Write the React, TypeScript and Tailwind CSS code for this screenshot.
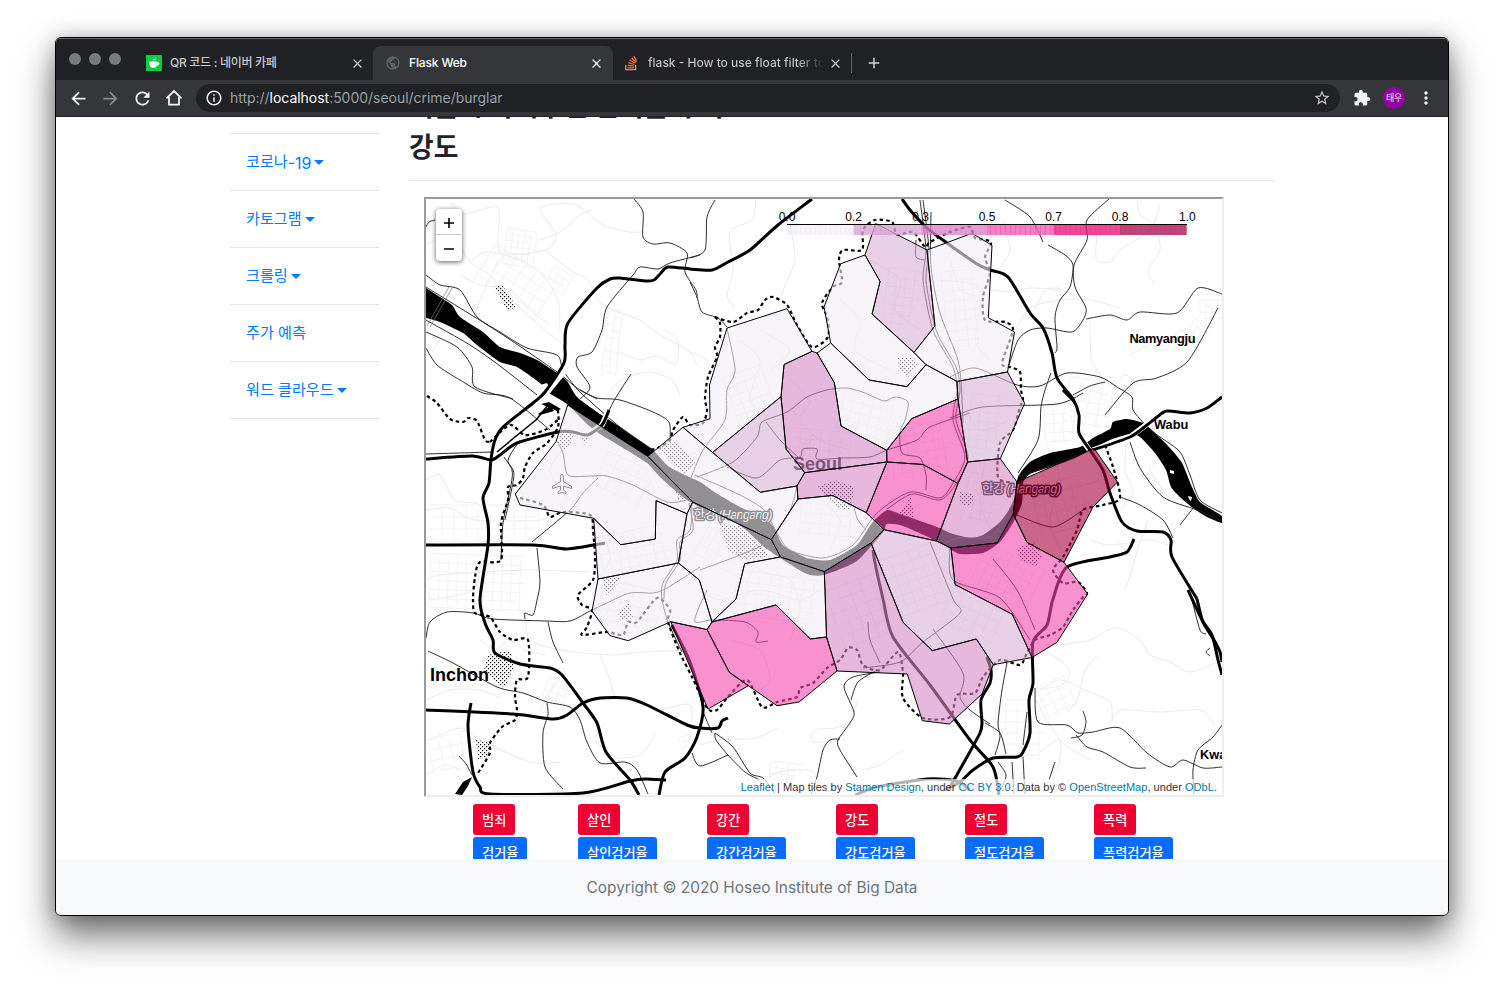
import React from "react";
import {
  MdAdd,
  MdArrowBack,
  MdArrowForward,
  MdClose,
  MdExtension,
  MdMoreVert,
  MdOutlineInfo,
  MdPublic,
  MdRefresh,
  MdStarBorder,
} from "react-icons/md";

type Pt = [number, number];

const parse = (s: string): Pt[] =>
  s.trim().split(/\s+/).map((p) => p.split(",").map(Number) as Pt);

/** Turns a list of points into a gently rounded path. */
function smooth(s: string, t = 0.13): string {
  const p = parse(s);
  let d = `M${p[0][0]} ${p[0][1]}`;
  for (let i = 0; i < p.length - 1; i++) {
    const a = p[Math.max(0, i - 1)];
    const b = p[i];
    const c = p[i + 1];
    const e = p[Math.min(p.length - 1, i + 2)];
    d += `C${(b[0] + (c[0] - a[0]) * t).toFixed(1)} ${(b[1] + (c[1] - a[1]) * t).toFixed(1)} ${(c[0] - (e[0] - b[0]) * t).toFixed(1)} ${(c[1] - (e[1] - b[1]) * t).toFixed(1)} ${c[0]} ${c[1]}`;
  }
  return d;
}

const PALE = "#f1eef6";
const LIGHT = "#d9b2d7";
const PINK = "#d489c5";
const HOT = "#f347ab";
const DARK = "#a5003c";

const districts: [string, string][] = [
  [LIGHT, "875.7,223.5 927,250 935,326 914,352.5 872,314 880,281.5 865,255"],
  [PALE, "865,255 840.7,263.7 824,307 830.7,343 869,380 907,386.7 926,364.7 914,352.5 872,314 880,281.5"],
  [PALE, "927,250 972,233.3 992,245.3 988.3,317.7 1014.5,332 1007.5,372 957,381.5 926,364.7 914,352.5 935,326"],
  [PALE, "817,353 830.7,343 869,380 907,386.7 926,364.7 957,381.5 958,399 911.7,418.7 886.7,450.3 841,426 834.3,382.7"],
  [PINK, "812,351.3 784,364.5 781,396.7 786,449 804.7,472.7 887,462 886.7,450.3 841,426 834.3,382.7 817,353"],
  [PALE, "727,328 787,308.7 812,351.3 784,364.5 781,396.7 712.5,452.5 683,427.3 710,418.7 709.5,385"],
  [LIGHT, "781,396.7 786,449 804.7,472.7 797,486 760.3,492.3 712.5,452.5"],
  [PALE, "683,427.3 712.5,452.5 760.3,492.3 797,486 798,499 771.3,539.7 692.7,502 647.7,456.3"],
  [PINK, "804.7,472.7 887,462 866.3,512.7 832.5,495.5 798,499 797,486"],
  [PALE, "798,499 832.5,495.5 866.3,512.7 884,529.7 871,543 824.3,571.7 780.5,557 771.3,539.7"],
  [HOT, "886.7,450.3 911.7,418.7 958,399 967.7,462 958,483.5 923,464.5 887,462"],
  [HOT, "887,462 923,464.5 958,483.5 936.5,541 884,529.7 866.3,512.7"],
  [LIGHT, "957,381.5 1007.5,372 1024.7,403.3 1000.3,458.7 967.7,462 958,399"],
  [PINK, "967.7,462 1000.3,458.7 1017,482 1013.3,514.3 997.3,543 951,548 936.5,541 958,483.5"],
  [DARK, "1017,482 1094,448.3 1117.5,482 1093,507 1064,562.3 1027,542.5 1013.3,514.3"],
  [HOT, "951,548 997.3,543 1013.3,514.3 1027,542.5 1064,562.3 1087.7,594 1057,642.3 1032,657.5 1012.3,614.3 955,584.5"],
  [LIGHT, "871,543 884,529.7 936.5,541 951,548 955,584.5 1012.3,614.3 1032,657.5 993.3,664.7 976.3,639 932.3,650.7 903,622.3"],
  [PINK, "824.3,571.7 871,543 903,622.3 932.3,650.7 976.3,639 993.3,664.7 982,694 949.3,724 922.3,720.7 907.3,674 837,671 826.5,637"],
  [PALE, "692.7,502 771.3,539.7 780.5,557 744.7,563.7 736,599 712,622 699.3,580 678.3,563 687,513.7"],
  [PALE, "744.7,563.7 780.5,557 824.3,571.7 826.5,637 810.3,639 776,605 712,622 736,599"],
  [HOT, "712,622 776,605 810.3,639 826.5,637 837,671 799,702 777,705.7 729.3,672.3 707,629.5"],
  [HOT, "670.7,621.7 707,629.5 729.3,672.3 748.3,685.7 708,709"],
  [PALE, "598,579 678.3,563 699.3,580 712,622 707,629.5 670.7,621.7 628.3,640.7 610,635.7 592,611"],
  [PALE, "593.7,518.3 620.7,544.7 655.3,539 656,500.5 687,513.7 678.3,563 598,579"],
  [PALE, "567.7,405 647.7,456.3 692.7,502 687,513.7 656,500.5 655.3,539 620.7,544.7 593.7,518.3 520,505 515.3,494 556,441.7"],
];

const river =
  "426,288 440,297 452,305 460,317 483,332 500,347 520,353 537,360 557,373 567,381 577,397 597,412 620,427 637,439 653,450 668,466 687,476 700,482 716,493 740,507 764,518 774,527 783,545 807,558 830,560 857,545 872,523 887,510 903,515 937,527 950,533 970,538 983,535 1000,522 1013,503 1018,477 1030,462 1050,453 1080,447 1093,438 1110,429 1113,422 1127,419 1143,423 1153,431 1170,448 1182,463 1192,487 1200,502 1222,516 1222,523 1207,517 1193,508 1181,498 1171,487 1166,470 1155,453 1140,437 1130,434 1110,440 1093,449 1073,459 1050,467 1030,474 1023,483 1022,503 1013,523 1000,542 983,553 960,554 950,549 937,541 903,526 887,524 883,532 857,561 824,575 807,574 780,558 763,546 745,529 725,517 708,511 690,502 678,493 660,477 647,463 620,446 600,434 587,424 567,404 547,392 540,383 517,367 500,362 477,345 463,333 440,322 426,318";

const heavy: string[] = [
  "812,199 778,225 750,250 728,262 712,270 690,269 668,267 660,274 654,280 645,281 620,278 610,279 597,288 568,323 565,345 564,363 545,392 533,403 503,427 495,440 491,459 489,483 483,498 488,523 488,545 480,599 485,623 493,640 495,653 520,664 550,668 562,675 583,703 597,723 606,752 630,780 639,795",
  "426,459 472,456 491,460 500,455 517,443 558,432 573,432 587,435 602,425 609,410",
  "426,545 533,545 567,549 605,543",
  "426,710 513,714 553,719 567,715 583,703 600,698 627,698 647,705 687,725 700,728 718,728 722,721 728,718",
  "471,703 468,727 473,772 480,787 490,794 583,793 630,781 645,779 666,780",
  "659,795 665,772 685,758 697,737 703,707 690,662 672,625",
  "902,199 910,210 927,228 947,243 977,264 990,270 1008,277 1030,313 1043,328 1052,353 1057,378 1073,399 1079,415 1079,433 1090,450 1103,470 1110,493 1122,522 1137,531 1163,532 1171,540 1172,557 1197,599",
  "1188,590 1202,620 1212,635 1218,660 1222,675",
  "1197,599 1203,622 1214,640 1220,652 1222,662",
  "1222,397 1207,408 1190,413 1167,411 1157,417 1147,425 1130,437 1093,450",
  "1134,539 1127,552 1110,557 1067,567 1053,599 1047,625 1033,642 1033,683 1029,700 1030,733 1023,752 1017,757 993,758 973,770 960,782 945,790",
  "873,550 875,563 883,599 893,637 930,685 970,740 993,767 999,795",
  "987,657 991,670 990,683 981,700 982,723 980,733 967,757 950,787",
  "855,795 877,787 927,779 957,781 970,790",
  "1063,390 1071,398 1075,403",
];

const thin: string[] = [
  "634,199 643,212 643,237 653,244 670,243 687,253 685,272 696,290 697,298",
  "690,282 697,297 702,312 718,318 727,327",
  "700,255 670,263 658,269 640,267 633,275 607,307 602,330 592,352 578,357 577,367 590,387 580,399",
  "715,200 707,217 705,250 690,258",
  "435,220 429,222 426,227",
  "426,275 440,285 460,290 477,317 500,332 527,348 557,355 563,370 578,390 600,410 620,427 653,450",
  "426,287 500,333 557,372 577,388 597,399",
  "426,332 457,347 472,367 475,387 513,399",
  "426,320 470,345 500,366 537,395",
  "426,348 437,365 460,380 483,393 510,398 550,430",
  "631,374 615,399 602,425",
  "580,390 597,398 620,400 653,412 669,422 670,440",
  "426,454 492,452",
  "504,457 512,470 511,485 503,523 501,560",
  "520,440 508,460 514,475 505,520",
  "556,440 563,453 568,475 590,476 607,476 633,485 667,502 687,500",
  "598,478 583,493 570,510 532,542",
  "537,548 540,582 537,600 533,615 525,613 525,619",
  "426,638 430,622 447,612 473,613 493,619 547,621 570,621 592,610 607,603 630,593 653,593 667,588 700,567",
  "548,622 553,642 563,663",
  "428,651 453,663 497,687 523,693 547,702 570,707 580,720 587,742 600,763 625,762 637,770 648,794",
  "547,703 548,715 543,733 545,767 563,789",
  "715,733 733,747 750,773 763,778 775,794",
  "715,733 716,740 728,755 745,772 760,780",
  "728,755 700,766 692,753",
  "880,672 853,677 844,687 854,712 850,723 838,740 840,750 857,777",
  "877,670 858,682 851,700",
  "840,739 830,740 823,750 817,777 811,794",
  "1005,200 1030,217 1043,242",
  "1048,245 1065,255 1073,265 1070,287 1060,300 1055,317 1057,347 1055,353",
  "1109,199 1087,220 1087,240 1074,265 1075,287 1086,308 1083,320 1072,332 1047,328 1030,330 1018,340 1009,365",
  "1086,319 1110,315 1127,320 1140,312 1177,313 1198,288 1222,294",
  "1218,308 1188,361 1157,378 1133,383 1105,415",
  "950,377 975,368 1017,385 1040,386 1067,373 1100,377 1117,387 1132,397 1133,410 1147,427",
  "1073,395 1090,386 1105,382",
  "1051,373 1045,390 1041,407 1038,440 1018,473",
  "950,418 983,407 1057,404 1083,393",
  "1130,442 1140,468 1163,497 1197,510 1222,521",
  "1198,503 1190,512 1180,525",
  "1143,425 1160,437 1180,452 1190,475 1200,500 1222,513",
  "1120,497 1140,505 1163,520 1173,538",
  "1017,515 1053,527 1083,510",
  "1018,477 1050,466 1093,449",
  "1035,688 1038,722 1067,725 1078,733 1093,732 1120,728 1147,753 1170,767 1183,760 1203,768 1222,767",
  "1083,711 1086,722 1082,735 1071,738",
  "1076,735 1087,747 1103,752 1130,767 1146,768",
  "1222,725 1213,737 1198,750 1193,770 1194,794",
  "1007,663 1002,690 998,723 1000,737 995,755",
  "985,723 1000,733 1006,754",
  "1027,712 1023,745",
  "1023,757 1025,794",
  "998,762 1006,775 1001,790",
  "1012,762 1014,794",
  "1055,762 1049,780",
  "727,328 735,370 727,390 725,420 703,450 690,480",
  "697,477 733,462 757,437 762,422 787,412 807,397 827,390 847,388 865,393 884,401 895,397 908,402 905,420 900,432 902,453 920,458 926,475 926,490",
  "727,467 757,478 780,460 800,457 803,449 817,449 817,459 843,458 870,457 887,450 917,440 930,427 970,413",
  "766,422 780,440 798,457",
  "797,487 790,510 770,540 740,555 700,570",
  "695,475 740,495 764,510 777,533 790,550 823,558 853,545 877,513 910,492 940,498 953,483 965,457 953,420 957,390 953,367 933,330 923,280 926,250 920,200",
  "887,509 912,494 940,500 956,484 968,457 956,420 960,390 956,367 936,330 926,280 929,250 923,200",
  "931,212 931,267 940,313 957,357 961,380 963,423",
  "916,240 916,257 925,260",
  "930,542 953,599 960,613 923,642 900,662 863,668",
  "950,549 953,580 1000,598 1030,640",
  "868,622 870,640 880,663",
  "933,629 963,673 960,697 970,710 990,724",
  "993,559 1017,590 1035,630",
  "692,503 690,530 677,540 677,560 663,583 662,599 668,622 682,652",
  "689,503 693,530 680,542 680,560 666,583 664,599",
  "707,590 700,605 695,622 712,620 745,622 758,632 756,642 768,641",
  "854,508 858,520 866,530",
  "703,712 712,733",
  "942,545 958,538 990,537 1004,520 1014,500",
  "1192,600 1200,630 1206,634",
  "1210,648 1206,652 1210,656",
  "459,756 466,764 472,775",
];

const dashed: string[] = [
  "427,396 437,403 450,419 463,422 468,418 477,421 485,440 490,442",
  "715,317 733,322 747,313 758,310 765,300 773,297 787,305 797,325 812,347 828,337 827,317 822,303 833,287 842,282 839,260 843,250 862,250 863,230 875,220 892,222 897,235 913,232 925,247 930,242 950,232 970,227 975,238 991,242 985,257 990,273 983,297 985,320 1005,322 1013,330 1002,363 1010,367 1020,372 1021,390 1023,400 1020,407 1013,430 1000,443 998,477 1013,483",
  "715,317 720,323 720,337 715,347 717,357 708,377 705,399 707,410 703,423 690,425 683,417 673,430 670,440 658,448 650,450",
  "558,410 558,427 547,443 533,453 525,467 523,478 517,485 508,487 508,500 501,523 501,560 480,562 475,577 473,599 475,613 490,617 500,632 513,640 528,640 528,677 517,680 515,697 517,710 515,720 502,727 490,743 490,753 478,773",
  "520,498 543,505 550,517 563,512 590,515 593,530 595,557 593,580 578,595 582,605 592,610 587,627 582,635 607,632 623,635 628,622 637,622 657,598 670,610 668,622 680,653 692,677 707,708 717,710 727,698 747,680 762,707 777,702 797,697 800,688 813,683 827,668 840,660 848,648 857,650 863,665 880,670 898,652 903,673 903,698 923,718 950,717 957,695 975,693 983,677 1000,660 1020,665 1027,653 1035,640 1050,635 1063,627 1073,610 1083,597 1087,593 1078,582 1063,583 1053,570 1063,557 1077,530 1083,510 1103,505 1120,498 1113,467 1105,445",
  "490,442 510,425 525,435 545,430 560,418",
];

const faint: string[] = [
  "450,202 465,214 498,208 500,252 545,250 556,235 540,208 573,204 590,215 605,226 628,232 641,232",
  "540,240 560,232 580,215 592,210",
  "545,250 570,270 588,280 598,300 613,310 640,320 660,335 690,352 697,366",
  "426,245 452,235 470,262 490,275 500,290 520,308 545,330 563,345",
  "470,262 485,252 512,257 540,272 558,300 560,330",
  "432,352 445,332 470,322 480,300 498,260",
  "460,275 480,285 510,290 530,310 550,325",
  "593,352 600,342 608,308",
  "610,390 625,378 650,372 672,380 680,396",
  "620,352 640,360 656,356 676,364 678,342 665,330",
  "756,200 752,220 730,232 733,270 727,296 735,308",
  "800,200 792,230 795,260 785,285 782,296",
  "690,352 704,358 715,370",
  "990,290 1010,292 1030,288 1060,290 1070,292",
  "1003,220 1010,250 1002,265",
  "1099,215 1096,258 1110,262 1120,250 1150,230 1160,205",
  "1137,200 1140,215 1155,225 1160,250 1148,270 1155,285",
  "1014,332 1030,308 1060,300 1090,300 1120,308",
  "1090,320 1092,360 1110,385 1125,375 1140,386",
  "1190,340 1180,330 1165,350 1150,345 1130,355",
  "1035,310 1045,290 1060,288",
  "1127,440 1125,470 1133,492 1120,510",
  "1148,520 1138,548 1132,570 1125,590",
  "1090,540 1110,545 1150,540 1168,545",
  "1040,648 1060,660 1070,672 1062,685 1036,690",
  "1060,645 1090,640 1108,630 1120,628 1140,640 1150,655 1170,662 1190,672 1222,660",
  "1040,690 1060,680 1085,690 1110,702 1112,722",
  "1097,656 1085,670 1078,698 1068,712",
  "1112,722 1120,710 1160,712 1200,710 1215,725",
  "1040,752 1060,740 1058,770",
  "1030,690 1060,740 1090,760",
  "426,480 440,475 455,500 480,505 490,530",
  "426,510 450,508 475,520 540,520 560,510",
  "426,580 440,575 482,572 530,570 590,572",
  "430,600 470,592 480,575",
  "526,620 530,640 560,650 610,655 640,652 690,650",
  "560,680 550,690 540,712",
  "600,655 610,680 614,698",
  "600,720 596,740 615,757 640,755 655,735",
  "426,700 450,690 480,690 500,698",
  "430,740 460,728 480,740 530,762 560,762",
  "426,775 445,765 460,770",
  "655,712 690,705 690,740",
  "700,745 720,740 755,738 778,728",
  "765,780 780,772 810,770 816,778",
  "858,700 850,720 835,728 815,730 813,742 840,740",
  "862,770 880,765 895,755 903,750",
  "480,640 495,650 510,640 525,650 545,655",
  "1170,500 1150,470 1160,460",
  "590,590 610,560 600,530 570,500 550,470 570,440",
  "700,590 720,600 760,590 800,600 820,590",
  "730,540 760,570 790,580 800,610 790,640",
  "730,640 760,650 770,680 760,690",
  "640,500 660,470 690,455 720,440",
  "740,340 760,360 750,400 770,420",
  "760,330 790,350 770,370",
  "790,380 810,400 800,420 820,440 850,450",
  "840,300 860,320 855,350 890,370",
  "870,260 900,280 895,310 920,330",
  "950,260 960,290 980,300 975,340 990,360",
  "940,280 975,285 985,305",
  "960,400 980,430 1010,420",
  "820,500 840,520 830,550",
  "985,460 980,500 990,530",
  "1040,470 1060,490 1100,480",
  "1050,450 1060,480 1050,520 1060,550",
];

interface Grid { x: number; y: number; w: number; h: number; a: number; s: number }
const grids: Grid[] = [
  { x: 505, y: 230, w: 30, h: 36, a: 8, s: 6 },
  { x: 478, y: 262, w: 80, h: 45, a: 32, s: 12 },
  { x: 605, y: 310, w: 14, h: 66, a: 6, s: 7 },
  { x: 548, y: 270, w: 24, h: 22, a: 30, s: 7 },
  { x: 430, y: 505, w: 110, h: 36, a: 0, s: 12 },
  { x: 430, y: 555, w: 95, h: 54, a: 2, s: 9 },
  { x: 600, y: 530, w: 70, h: 40, a: -12, s: 9 },
  { x: 600, y: 585, w: 60, h: 40, a: 14, s: 10 },
  { x: 700, y: 530, w: 60, h: 40, a: 30, s: 10 },
  { x: 735, y: 575, w: 80, h: 45, a: 8, s: 11 },
  { x: 835, y: 580, w: 55, h: 70, a: -20, s: 12 },
  { x: 888, y: 550, w: 55, h: 60, a: -20, s: 10 },
  { x: 945, y: 590, w: 60, h: 50, a: 24, s: 11 },
  { x: 975, y: 555, w: 65, h: 45, a: 25, s: 9 },
  { x: 1035, y: 480, w: 55, h: 50, a: -14, s: 10 },
  { x: 965, y: 475, w: 35, h: 50, a: 12, s: 9 },
  { x: 800, y: 505, w: 60, h: 35, a: 5, s: 10 },
  { x: 890, y: 425, w: 60, h: 50, a: -10, s: 9 },
  { x: 970, y: 395, w: 35, h: 55, a: 5, s: 9 },
  { x: 840, y: 395, w: 50, h: 40, a: 15, s: 10 },
  { x: 730, y: 370, w: 40, h: 50, a: -20, s: 10 },
  { x: 790, y: 430, w: 60, h: 30, a: 5, s: 10 },
  { x: 885, y: 270, w: 35, h: 60, a: 8, s: 9 },
  { x: 945, y: 270, w: 35, h: 80, a: -6, s: 10 },
  { x: 770, y: 763, w: 35, h: 16, a: 6, s: 6 },
  { x: 995, y: 700, w: 50, h: 60, a: 0, s: 11 },
  { x: 1042, y: 680, w: 32, h: 36, a: -24, s: 10 },
  { x: 1200, y: 300, w: 24, h: 18, a: 0, s: 6 },
  { x: 1188, y: 322, w: 18, h: 22, a: 30, s: 6 },
  { x: 430, y: 735, w: 40, h: 34, a: -12, s: 11 },
  { x: 545, y: 680, w: 26, h: 22, a: 20, s: 7 },
  { x: 680, y: 735, w: 18, h: 14, a: -20, s: 5 },
  { x: 1065, y: 380, w: 45, h: 60, a: 10, s: 11 },
  { x: 1045, y: 405, w: 28, h: 40, a: -4, s: 9 },
  { x: 598, y: 460, w: 50, h: 40, a: 24, s: 12 },
];

function gridPath({ x, y, w, h, s }: Grid): string {
  let d = "";
  for (let i = 0, k = 0; i <= w; i += s, k++) d += `M${x + i} ${y + (k % 3) * 3}V${y + h - (k % 2) * 4}`;
  for (let j = 0, k = 0; j <= h; j += s, k++) d += `M${x + (k % 2) * 4} ${y + j}H${x + w - (k % 3) * 4}`;
  return d;
}

const parks = [
  "495,287 502,285 516,306 508,312",
  "898,358 914,357 917,366 908,377 899,368",
  "560,434 574,434 570,445 564,452 558,444",
  "580,437 590,437 585,445",
  "658,446 676,440 696,464 686,474 668,460",
  "719,524 742,526 770,556 745,560 728,550",
  "675,490 690,492 688,502 678,500",
  "817,487 835,480 855,487 850,510 838,508",
  "905,505 911,497 914,518 898,514",
  "959,492 974,494 972,506 960,504",
  "1017,548 1034,542 1042,556 1036,566 1020,560",
  "602,577 622,577 612,590 606,595",
  "618,612 629,601 633,618 620,620",
  "488,655 510,650 514,666 505,688 496,682 484,668",
  "476,740 490,742 488,756 478,760",
];

const legend: [number, string, string][] = [
  [787, "0.0", "#f3eff8"],
  [853.5, "0.2", "#d9a3d5"],
  [920.5, "0.3", "#dc82c8"],
  [987, "0.5", "#f957b5"],
  [1053.5, "0.7", "#fb0d7b"],
  [1120, "0.8", "#b01150"],
];

const SeoulMap = () => (
  <svg viewBox="426 199 796 596" className="block h-full w-full font-['Liberation_Sans',sans-serif]">
    <defs>
      <pattern id="stipple" width="4" height="4" patternUnits="userSpaceOnUse">
        <rect width="1.200" height="1.200" fill="#000" />
        <rect x="2" y="2" width="1.200" height="1.200" fill="#000" />
      </pattern>
      <pattern id="ticks" width="5" height="10" patternUnits="userSpaceOnUse">
        <rect width="1" height="10" fill="#555" opacity="0.22" />
      </pattern>
    </defs>
    <rect x="426" y="199" width="796" height="596" fill="#fff" />
    <g fill="none" stroke="#e4e4e4" strokeWidth="0.8">
      {faint.map((p) => <path key={p} d={smooth(p)} />)}
      {grids.map((g) => (
        <path key={`${g.x}-${g.y}`} d={gridPath(g)} stroke="#f0f0f0" transform={`rotate(${g.a} ${g.x + g.w / 2} ${g.y + g.h / 2})`} />
      ))}
    </g>
    {parks.map((p) => <polygon key={p} points={p} fill="url(#stipple)" />)}
    <path d={smooth(river, 0.1) + "Z"} fill="#000" />
    <path d="M541 404l8-2 12 7-4 2zM538 414l12-8 4 5-14 4zM455 794l8-12 9-5-4 9-6 9z" fill="#000" />
    <g fill="#fff">
      <path d="M1170 470l4 1 0 3-4-1zM1188 496l4 1-1 4-2-2zM540 385l7-2 3 6-5 1z" />
    </g>
    <g fill="none" stroke="#222" strokeWidth="0.95">
      {thin.map((p) => <path key={p} d={smooth(p)} />)}
    </g>
    <path d="M452 288L430 327M449 287L427 326" stroke="#777" strokeWidth="0.7" />
    <g fill="none" stroke="#fff" strokeWidth="5.500">
      <path d="M566 369L541 400M577 432L587 435L602 425L609 410M1083 441L1095 458M1150 422L1130 437L1093 450" />
    </g>
    <g fill="none" stroke="#000" strokeWidth="2.200" strokeDasharray="3.5 3">
      {dashed.map((p) => <path key={p} d={smooth(p)} />)}
    </g>
    <g fill="none" stroke="#000" strokeWidth="3" strokeLinejoin="round">
      {heavy.map((p) => <path key={p} d={smooth(p)} />)}
      <path d="M497 452L515 437L536 420L548 405" strokeWidth="1.600" />
    </g>
    <path d="M562 474.5c1.200 0 1.500 1.500 1.500 3v4l8 5v2l-8-2.500v4l2.500 2v1.500l-4-1-4 1v-1.500l2.500-2v-4l-8 2.500v-2l8-5v-4c0-1.500.3-3 1.500-3z" fill="#fff" stroke="#000" strokeWidth="1" />
    <g fill="#000" fontWeight="700">
      <text x="430" y="681" fontSize="18">Inchon</text>
      <text x="1129.500" y="343" fontSize="12.800" textLength="66">Namyangju</text>
      <text x="1154" y="429" fontSize="12.800">Wabu</text>
      <text x="1200" y="759" fontSize="12.800">Kwangju</text>
      <text x="793" y="470" fontSize="18">Seoul</text>
    </g>
    <g fill="#fff" stroke="#000" strokeWidth="3" strokeLinejoin="round" fontSize="12.500" style={{ paintOrder: "stroke" }} className="font-['Liberation_Sans','Noto_Sans_CJK_KR',sans-serif]">
      <text x="693.500" y="518.500" textLength="79">한강 <tspan fontStyle="italic">(Hangang)</tspan></text>
      <text x="982" y="492.500" textLength="79">한강 <tspan fontStyle="italic">(Hangang)</tspan></text>
    </g>
    <g stroke="#000" strokeWidth="1" strokeLinejoin="round" fillOpacity="0.6">
      {districts.map(([c, p]) => <polygon key={p} points={p} fill={c} />)}
    </g>
    <g fontSize="12" textAnchor="middle">
      {legend.map(([x, label, c]) => (
        <g key={label}>
          <rect x={x} y="225" width="66.700" height="10" fill={c} opacity="0.78" />
          <text x={x} y="221">{label}</text>
        </g>
      ))}
      <text x="1187.300" y="221">1.0</text>
      <rect x="787" y="225" width="200" height="10" fill="url(#ticks)" opacity="0.25" />
      <rect x="987" y="225" width="200" height="10" fill="url(#ticks)" />
      <rect x="787" y="224" width="400" height="1" />
    </g>
  </svg>
);

const tabText = "truncate text-[12px] leading-4 font-medium";

const Caret = () => (
  <span className="ml-[3px] inline-block border-x-[5px] border-t-[5px] border-x-transparent border-t-[#007bff]" />
);

const nav: [string, string, boolean][] = [
  ["코로나", "-19", true],
  ["카토그램", "", true],
  ["크롤링", "", true],
  ["주가 예측", "", false],
  ["워드 클라우드", "", true],
];

const buttons: [string, string][] = [
  ["범죄", "검거율"],
  ["살인", "살인검거율"],
  ["강간", "강간검거율"],
  ["강도", "강도검거율"],
  ["절도", "절도검거율"],
  ["폭력", "폭력검거율"],
];

const Link = ({ children }: { children: React.ReactNode }) => <a className="text-[#0078a8]">{children}</a>;

const BrowserTabs = () => (
  <div className="flex h-[42px] shrink-0 items-end border-t border-[#66676a] bg-[#202124]">
    <div className="flex h-[34px] w-[90px] items-center gap-2 pb-[9px] pl-[13px]">
      <span className="size-3 rounded-full bg-[#7a7b7e]" />
      <span className="size-3 rounded-full bg-[#7a7b7e]" />
      <span className="size-3 rounded-full bg-[#7a7b7e]" />
    </div>
    <div className="flex h-[34px] w-[227px] items-center">
      <svg viewBox="0 0 16 16" className="size-4 shrink-0">
        <rect width="16" height="16" fill="#03cf3f" />
        <path d="M3 6.500h8.500v.8c2.600-.4 2.600 3.500-.5 3.200-.7 1.600-1.800 2.300-3.600 2.300C4.500 12.800 3 10.500 3 6.500z" fill="#fff" />
        <path d="M6.500 5.500c0-2 2.500-1 2.700-2.800 1.300 1.300 0 2.800-2.700 2.800z" fill="#fff" />
      </svg>
      <span className={`${tabText} ml-2 w-[180px] tracking-[-0.3px] text-[#c6c8cb]`}>QR 코드 : 네이버 카페</span>
      <MdClose className="size-[15px] text-[#c6c8cb]" />
    </div>
    <div className="flex h-[34px] w-[240px] items-center rounded-t-lg bg-[#35363a] pl-3">
      <MdPublic className="size-4 shrink-0 text-[#5f6165]" />
      <span className={`${tabText} ml-2 w-[180px] tracking-[-0.15px] text-white`}>Flask Web</span>
      <MdClose className="size-[15px] text-white" />
    </div>
    <div className="flex h-[34px] items-center pl-3">
      <svg viewBox="0 0 14 16" className="h-4 w-[14px]" fill="none" strokeWidth="1.300">
        <path d="M.8 10v4.800h9.800V10" stroke="#bcbbbb" strokeWidth="1.100" />
        <path d="M2.500 12.800h6.500M2.700 10.400l6.400.7M3.300 7.700l6.100 1.800M4.600 5l5.400 3.200M6.700 2.700l4.200 4.800M9 1l2.500 5.400" stroke="#f26a1c" />
      </svg>
      <span className="ml-[9px] w-[176px] overflow-hidden bg-gradient-to-r from-[#c6c8cb] from-85% to-[#202124] bg-clip-text text-[12px] leading-4 font-medium whitespace-nowrap text-transparent">
        flask - How to use float filter to
      </span>
      <MdClose className="ml-1 size-[15px] text-[#c6c8cb]" />
      <span className="ml-2 h-5 w-px bg-[#606367]" />
      <MdAdd className="ml-[13px] size-[18px] text-[#d0d2d5]" />
    </div>
  </div>
);

const Toolbar = () => (
  <div className="flex h-[37px] shrink-0 items-center border-b border-[#232427] bg-[#35363a] pl-[12px] text-[#f1f3f4]">
    <MdArrowBack className="size-[21px]" />
    <MdArrowForward className="ml-[11px] size-[21px] text-[#87898c]" />
    <MdRefresh className="ml-[11px] size-[21px]" />
    <svg viewBox="0 0 18 18" className="ml-[12px] size-[18px]" fill="none" stroke="currentColor" strokeWidth="1.800">
      <path d="M1.500 9.300L9 2l7.500 7.300M4 8v7.600h10V8" />
    </svg>
    <div className="ml-[13px] flex h-7 w-[1144px] items-center rounded-full bg-[#202124] pl-[9px] text-[14px]">
      <MdOutlineInfo className="size-[18px]" />
      <span className="ml-[7px] flex-1 pb-[2px] tracking-[-0.03px] text-[#9aa0a6]">
        http://<span className="text-white">localhost</span>:5000/seoul/crime/burglar
      </span>
      <MdStarBorder className="mr-[9px] size-[18px] text-[#c6c8cb]" />
    </div>
    <MdExtension className="ml-[13px] size-[18px]" />
    <span className="ml-3 flex size-[22px] items-center justify-center rounded-full bg-[#9000a4] text-[9px] tracking-[-0.3px]">태우</span>
    <MdMoreVert className="ml-[11px] size-[20px]" />
  </div>
);

export default function App() {
  return (
    <div className="h-[989px] w-[1504px] overflow-hidden bg-white pt-[37px] pl-[55px] font-[Inter,'Noto_Sans_CJK_KR',sans-serif]">
      <div className="flex h-[879px] w-[1394px] flex-col overflow-hidden rounded-[6px] border border-black bg-white shadow-[0_20px_36px_rgba(0,0,0,0.55),0_0_20px_rgba(0,0,0,0.22)]">
        <BrowserTabs />
        <Toolbar />
        <div className="flex min-h-0 flex-1 overflow-hidden pl-[174px]">
          <aside className="mt-4 w-[149px] shrink-0">
            <ul className="border-t border-[#e3e5e7]">
              {nav.map(([label, suffix, caret]) => (
                <li key={label} className="flex h-[57px] items-center border-b border-[#e3e5e7] pt-px pl-4 text-[15.100px] whitespace-nowrap text-[#007bff]">
                  {label}
                  {suffix && <span className="text-[16px]">{suffix}</span>}
                  {caret && <Caret />}
                </li>
              ))}
            </ul>
          </aside>
          <main className="ml-[30px] w-[865px]">
            <h2 className="-mt-[31px] h-[95px] border-b border-[#e3e5e7] text-[26.800px] leading-[41px] font-bold text-[#212529]">
              서울시 자치구별 범죄율의 비
              <br />
              강도
            </h2>
            <div className="relative mt-4 ml-[15px] h-[600px] w-[800px] border-2 border-t-[#9a9a9a] border-r-[#eee] border-b-[#eee] border-l-[#9a9a9a]">
              <SeoulMap />
              <div className="absolute top-[10px] left-[10px] flex w-[26px] flex-col rounded-[4px] bg-white shadow-[0_1px_5px_rgba(0,0,0,0.65)]">
                <span className="flex h-[26px] items-center justify-center border-b border-[#ccc] pt-[2px]">
                  <svg viewBox="0 0 10 10" className="size-[10px]" stroke="#000" strokeWidth="1.600"><path d="M0 5h10M5 0v10" /></svg>
                </span>
                <span className="flex h-[26px] items-center justify-center pt-[2px]">
                  <svg viewBox="0 0 10 10" className="size-[10px]" stroke="#000" strokeWidth="1.600"><path d="M0 5h10" /></svg>
                </span>
              </div>
              <div className="absolute right-0 bottom-0 bg-white/70 px-[5px] font-['Liberation_Sans',sans-serif] text-[11px] leading-[16px] tracking-[0.035px] whitespace-nowrap text-[#333]">
                <Link>Leaflet</Link> | Map tiles by <Link>Stamen Design</Link>, under <Link>CC BY 3.0</Link>. Data by © <Link>OpenStreetMap</Link>, under <Link>ODbL</Link>.
              </div>
            </div>
            <div className="mt-[7px] ml-16 flex text-[13.200px] text-white">
              {buttons.map(([crime, rate], i) => (
                <div key={crime} className={`flex shrink-0 flex-col items-start gap-[2px] ${i === 0 ? "w-[105px]" : "w-[129px]"}`}>
                  <span className="flex h-[31px] items-center rounded-[3px] bg-[#f00032] px-[9px] pt-[2px] font-medium whitespace-nowrap">{crime}</span>
                  <span className="flex h-[31px] items-center rounded-[3px] bg-[#086cff] px-[9px] pt-[2px] font-medium whitespace-nowrap">{rate}</span>
                </div>
              ))}
            </div>
          </main>
        </div>
        <footer className="flex h-[56px] shrink-0 items-center justify-center bg-[#f8f9fa] pt-[2px] text-[15.400px] text-[#6c757d]">
          Copyright © 2020 Hoseo Institute of Big Data
        </footer>
      </div>
    </div>
  );
}
